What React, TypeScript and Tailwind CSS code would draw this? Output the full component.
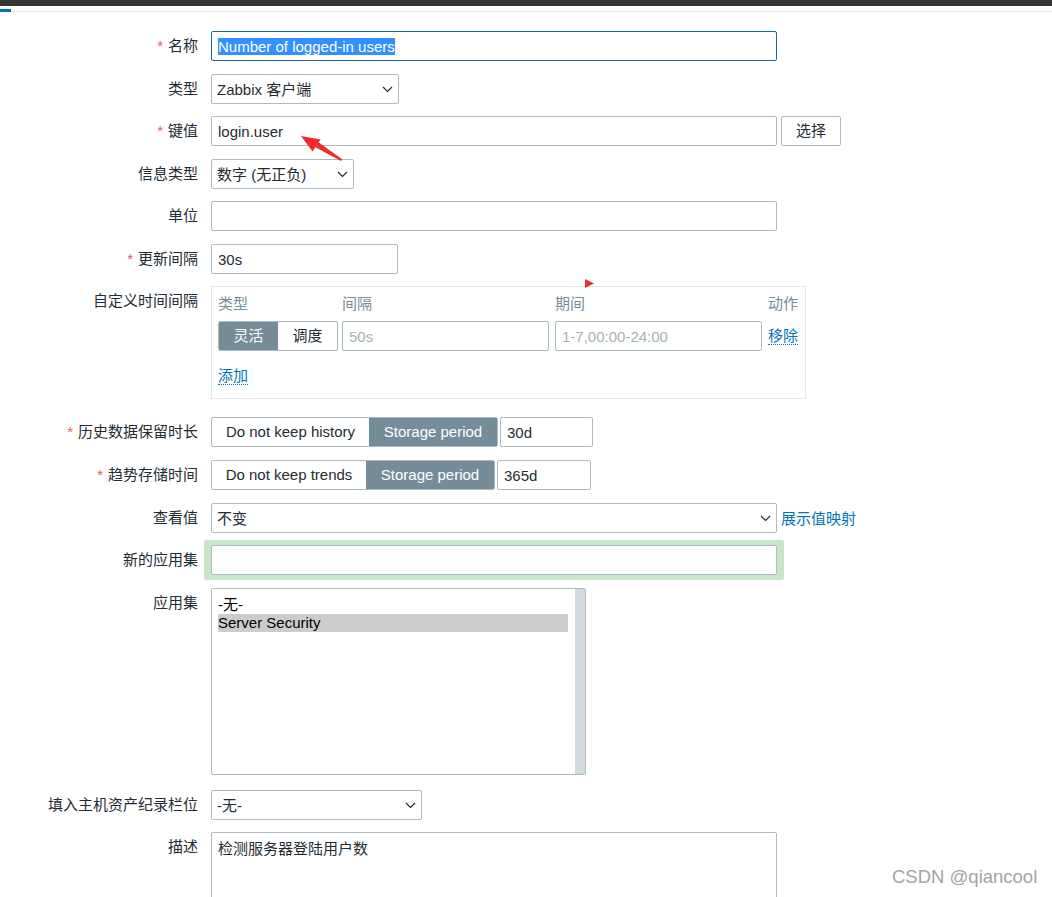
import type { ReactNode } from "react";
import clsx from "clsx";

const FONT = "font-['Liberation_Sans','Noto_Sans_CJK_SC',sans-serif]";

function Chevron() {
  return (
    <svg width="11" height="7" viewBox="0 0 11 7" className="shrink-0">
      <polyline points="1,1 5.5,5.5 10,1" fill="none" stroke="#1f2c33" strokeWidth="1.2" />
    </svg>
  );
}

function Row({
  label,
  required,
  className,
  labelClass,
  children
}: {
  label: string;
  required?: boolean;
  className?: string;
  labelClass?: string;
  children: ReactNode;
}) {
  return (
    <div className={clsx("flex items-start", className)}>
      <div className={clsx("w-[198px] shrink-0 text-right leading-[30px] whitespace-nowrap", labelClass)}>
        {required && <span className="text-[#e45959] mr-[5px]">*</span>}
        {label}
      </div>
      <div className="ml-[13px] flex items-start">{children}</div>
    </div>
  );
}

function TextBox({
  width,
  children,
  placeholder,
  focused
}: {
  width: string;
  children?: ReactNode;
  placeholder?: string;
  focused?: boolean;
}) {
  return (
    <div
      className={clsx(
        "h-[30px] rounded-[2px] border bg-white px-[6px] pt-[1px] leading-[28px] whitespace-nowrap",
        focused ? "border-[#1a6aa0]" : "border-[#acbbc2]",
        width
      )}
    >
      {children ?? <span className="text-[#a7b1b6]">{placeholder}</span>}
    </div>
  );
}

function Select({ width, value }: { width: string; value: string }) {
  return (
    <div
      className={clsx(
        "flex h-[30px] items-center justify-between rounded-[2px] border border-[#acbbc2] bg-white pl-[5px] pr-[5px] whitespace-nowrap",
        width
      )}
    >
      <span className="pt-[2px]">{value}</span>
      <Chevron />
    </div>
  );
}

function Toggle({ options, active, widths }: { options: string[]; active: number; widths?: string[] }) {
  return (
    <div className="flex h-[30px] overflow-hidden rounded-[2px] border border-[#acbbc2] bg-white">
      {options.map((o, i) => (
        <div
          key={o}
          className={clsx(
            "flex items-center justify-center whitespace-nowrap pt-[1px]",
            widths ? widths[i] : "px-[14px]",
            i === active ? "bg-[#768d99] text-white" : "text-[#1f2c33]"
          )}
        >
          {o}
        </div>
      ))}
    </div>
  );
}

function Link({ children }: { children: ReactNode }) {
  return <span className="border-b border-dotted border-[#0275b8] text-[#0275b8] leading-[20px]">{children}</span>;
}

export default function App() {
  return (
    <div className={clsx("relative h-[897px] w-full overflow-hidden bg-white text-[15px] text-[#1f2c33]", FONT)}>
      {/* top bar */}
      <div className="h-[6px] bg-[#363636]" />
      <div className="relative mt-[5px] h-px bg-[#e8e8e8]">
        <div className="absolute left-0 top-[-2px] h-[3px] w-[11px] bg-[#0275b8]" />
      </div>

      <div className="mt-[19px] flex flex-col">
        <Row label="名称" required>
          <div className="h-[30px] w-[566px] rounded-[2px] border border-[#1a6aa0] bg-white px-[6px] pt-[1px] leading-[28px]">
            <span className="bg-[#3390ff] text-white">Number of logged-in users</span>
          </div>
        </Row>

        <Row label="类型" className="mt-[13px]">
          <Select width="w-[188px]" value="Zabbix 客户端" />
        </Row>

        <Row label="键值" required className="mt-[12px]">
          <TextBox width="w-[566px]">login.user</TextBox>
          <div className="ml-[4px] flex h-[30px] w-[60px] items-center justify-center rounded-[2px] border border-[#acbbc2] bg-white pt-[1px]">
            选择
          </div>
        </Row>

        <Row label="信息类型" className="mt-[13px]">
          <Select width="w-[143px]" value="数字 (无正负)" />
        </Row>

        <Row label="单位" className="mt-[12px]">
          <TextBox width="w-[566px]">{""}</TextBox>
        </Row>

        <Row label="更新间隔" required className="mt-[13px]">
          <TextBox width="w-[187px]">30s</TextBox>
        </Row>

        <Row label="自定义时间间隔" className="mt-[12px]">
          <div className="h-[113px] w-[595px] border border-[#e4e8eb] bg-white px-[6px] pt-[7px]">
            <div className="flex leading-[20px] text-[#768d99]">
              <div className="w-[119px]">类型</div>
              <div className="ml-[5px] w-[207px]">间隔</div>
              <div className="ml-[6px] w-[207px]">期间</div>
              <div className="ml-[6px]">动作</div>
            </div>
            <div className="mt-[7px] flex items-center">
              <Toggle options={["灵活", "调度"]} active={0} widths={["w-[59px]", "w-[59px]"]} />
              <div className="ml-[4px]">
                <TextBox width="w-[207px]" placeholder="50s" />
              </div>
              <div className="ml-[6px]">
                <TextBox width="w-[207px]" placeholder="1-7,00:00-24:00" />
              </div>
              <div className="ml-[6px]">
                <Link>移除</Link>
              </div>
            </div>
            <div className="mt-[14px]">
              <Link>添加</Link>
            </div>
          </div>
        </Row>

        <Row label="历史数据保留时长" required className="mt-[18px]">
          <Toggle options={["Do not keep history", "Storage period"]} active={1} widths={["w-[157px]", "w-[128px]"]} />
          <div className="ml-[2px]">
            <TextBox width="w-[93px]">30d</TextBox>
          </div>
        </Row>

        <Row label="趋势存储时间" required className="mt-[13px]">
          <Toggle options={["Do not keep trends", "Storage period"]} active={1} widths={["w-[154px]", "w-[128px]"]} />
          <div className="ml-[2px]">
            <TextBox width="w-[94px]">365d</TextBox>
          </div>
        </Row>

        <Row label="查看值" className="mt-[13px]">
          <Select width="w-[566px]" value="不变" />
          <span className="relative top-[1px] ml-[4px] leading-[30px] text-[#0275b8]">展示值映射</span>
        </Row>

        <Row label="新的应用集" className="mt-[7px]" labelClass="mt-[5px]">
          <div className="-ml-[7px] rounded-[2px] bg-[#c6e5c9] px-[7px] py-[5px]">
            <TextBox width="w-[566px]">{""}</TextBox>
          </div>
        </Row>

        <Row label="应用集" className="mt-[8px]">
          <div className="flex h-[187px] w-[375px] overflow-hidden rounded-[2px] border border-[#acbbc2] bg-white">
            <div className="flex-1 pl-[6px] pr-[7px] pt-[7px] leading-[18px] text-black">
              <div>-无-</div>
              <div className="bg-[#cccccc]">Server Security</div>
            </div>
            <div className="w-[10px] bg-[#d3dae0]" />
          </div>
        </Row>

        <Row label="填入主机资产纪录栏位" className="mt-[15px]">
          <Select width="w-[211px]" value="-无-" />
        </Row>

        <Row label="描述" className="mt-[12px]">
          <div className="h-[90px] w-[566px] rounded-[2px] border border-[#acbbc2] bg-white px-[6px] pt-[5px] leading-[22px]">
            检测服务器登陆用户数
          </div>
        </Row>
      </div>

      {/* annotation arrow */}
      <svg className="pointer-events-none absolute left-0 top-0" width="1052" height="897">
        <polygon points="341,161 342.2,159.3 318.5,142.3 315.5,147.2" fill="#ee2a2a" />
        <polygon points="301,136 320.5,139.5 312.5,151.5" fill="#ee2a2a" />
        <polygon points="585,279 594,283.5 585,288" fill="#ea3030" />
      </svg>

      {/* watermark */}
      <div className="absolute left-[892px] top-[866px] text-[18.5px] leading-[22px] text-[#a3a3a3] font-['Liberation_Sans',sans-serif]">
        CSDN @qiancool
      </div>
    </div>
  );
}
